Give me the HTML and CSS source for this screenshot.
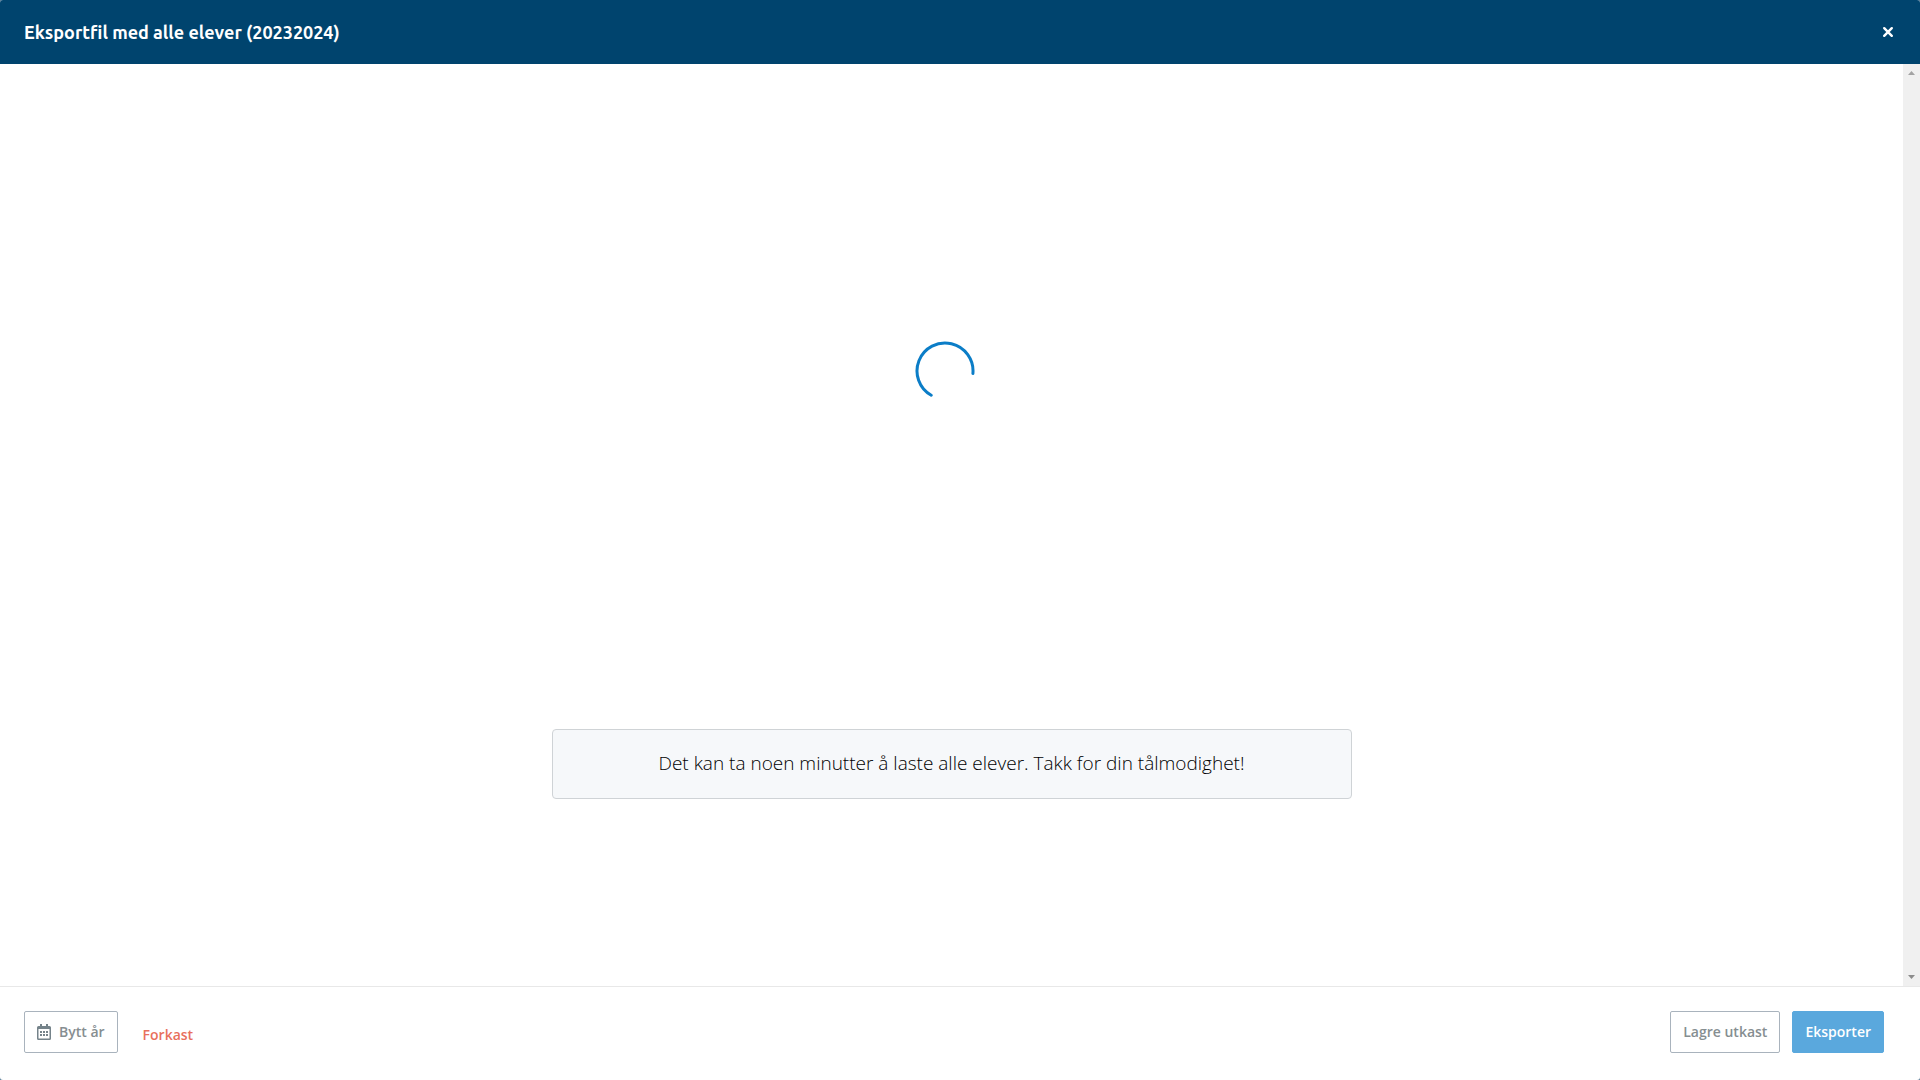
FILE: index.html
```html
<!DOCTYPE html>
<html lang="no">
<head>
<meta charset="utf-8">
<meta name="viewport" content="width=device-width, initial-scale=1">
<title>Eksportfil med alle elever</title>
<link rel="stylesheet" href="styles.css">
</head>
<body>
<div class="modal" role="dialog" aria-labelledby="title">
  <header class="modal-header">
    <h1 class="modal-title" id="title">Eksportfil med alle elever (20232024)</h1>
    <button class="close" type="button" aria-label="Lukk">
      <svg width="12" height="12" viewBox="0 0 12 12" aria-hidden="true"><path d="M2.2 2.2l7.6 7.6M9.8 2.2L2.2 9.8" stroke="#fff" stroke-width="2.4" stroke-linecap="round"/></svg>
    </button>
  </header>
  <div class="modal-body">
    <main class="content">
      <div class="loading">
        <svg class="spinner" width="60" height="60" viewBox="0 0 60 60" role="img" aria-label="Laster"><path d="M57.9 32.5A28 28 0 1 0 16.2 54.3" fill="none" stroke="#0b7dc7" stroke-width="3" stroke-linecap="round"/></svg>
      </div>
      <p class="notice">Det kan ta noen minutter å laste alle elever. Takk for din tålmodighet!</p>
    </main>
    <div class="scrollbar" aria-hidden="true">
      <svg width="17" height="17" viewBox="0 0 17 17"><path d="M5 11l3.500-4L12 11z" fill="#a3a3a3"/></svg>
      <svg width="17" height="17" viewBox="0 0 17 17"><path d="M5 6l3.500 4L12 6z" fill="#8c8c8c"/></svg>
    </div>
  </div>
  <footer class="modal-footer">
    <div class="actions actions-start">
      <button class="btn" type="button">
        <svg width="14" height="16" viewBox="0 0 14 16" aria-hidden="true"><path fill="#75838a" fill-rule="evenodd" d="M3 0h2v2h4V0h2v2h1.500A1.500 1.500 0 0 1 14 3.500v11a1.500 1.500 0 0 1-1.500 1.500h-11A1.500 1.500 0 0 1 0 14.500v-11A1.500 1.500 0 0 1 1.500 2H3zM1.500 5v9.500h11V5zM3 7h2v2H3zm3 0h2v2H6zm3 0h2v2H9zm-6 3h2v2H3zm3 0h2v2H6zm3 0h2v2H9z"/></svg>
        Bytt år
      </button>
      <a class="discard" href="#">Forkast</a>
    </div>
    <div class="actions actions-end">
      <button class="btn" type="button">Lagre utkast</button>
      <button class="btn btn-primary" type="button">Eksporter</button>
    </div>
  </footer>
</div>
</body>
</html>
```
FILE: styles.css
```css
* {
  box-sizing: border-box;
}

body {
  margin: 0;
  background: #5d7f99;
  font-family: "Open Sans", "Noto Sans", sans-serif;
}

.modal {
  display: flex;
  flex-direction: column;
  min-height: 100vh;
  overflow: hidden;
  border-radius: 3px;
  background: #fff;
}

.modal-header {
  display: flex;
  align-items: center;
  justify-content: space-between;
  min-height: 64px;
  padding: 0 24px;
  background: #00446e;
  color: #fff;
}

.modal-title {
  margin: 0;
  font-family: Ubuntu, "Noto Sans", sans-serif;
  font-size: 18px;
  font-weight: 600;
  line-height: 24px;
}

.close {
  display: flex;
  padding: 2px;
  border: 0;
  background: none;
  cursor: pointer;
}

.modal-body {
  display: flex;
  flex: 1;
}

.content {
  display: flex;
  flex: 1;
  flex-direction: column;
  align-items: center;
  padding: 277px 24px 24px;
}

.loading {
  padding-right: 14px;
  margin-bottom: 328px;
}

.spinner {
  display: block;
}

.notice {
  width: 100%;
  max-width: 800px;
  margin: 0;
  padding: 19px 24px 21px;
  border: 1px solid #cfd3d6;
  border-radius: 4px;
  background: #f6f8fa;
  color: #000;
  font-size: 19px;
  font-weight: 300;
  line-height: 28px;
  text-align: center;
}

.scrollbar {
  display: flex;
  flex-direction: column;
  justify-content: space-between;
  width: 17px;
  background: #f0f0f0;
}

.modal-footer {
  display: flex;
  justify-content: space-between;
  padding: 24px 36px 27px 24px;
  border-top: 1px solid #e8e8e8;
}

.actions {
  display: flex;
  align-items: center;
}

.actions-start {
  gap: 25px;
}

.actions-end {
  gap: 12px;
}

.btn {
  display: flex;
  align-items: center;
  gap: 8px;
  height: 42px;
  padding: 0 12px;
  border: 1px solid #a9b3bd;
  border-radius: 2px;
  background: #fff;
  color: #868e91;
  font-family: inherit;
  font-size: 14px;
  font-weight: 600;
  line-height: 20px;
  cursor: pointer;
}

.btn-primary {
  border-color: #5aa8dd;
  background: #5aa8dd;
  color: #fff;
}

.discard {
  padding-top: 6px;
  color: #e8705c;
  font-size: 14px;
  font-weight: 600;
  line-height: 20px;
  text-decoration: none;
}
```
